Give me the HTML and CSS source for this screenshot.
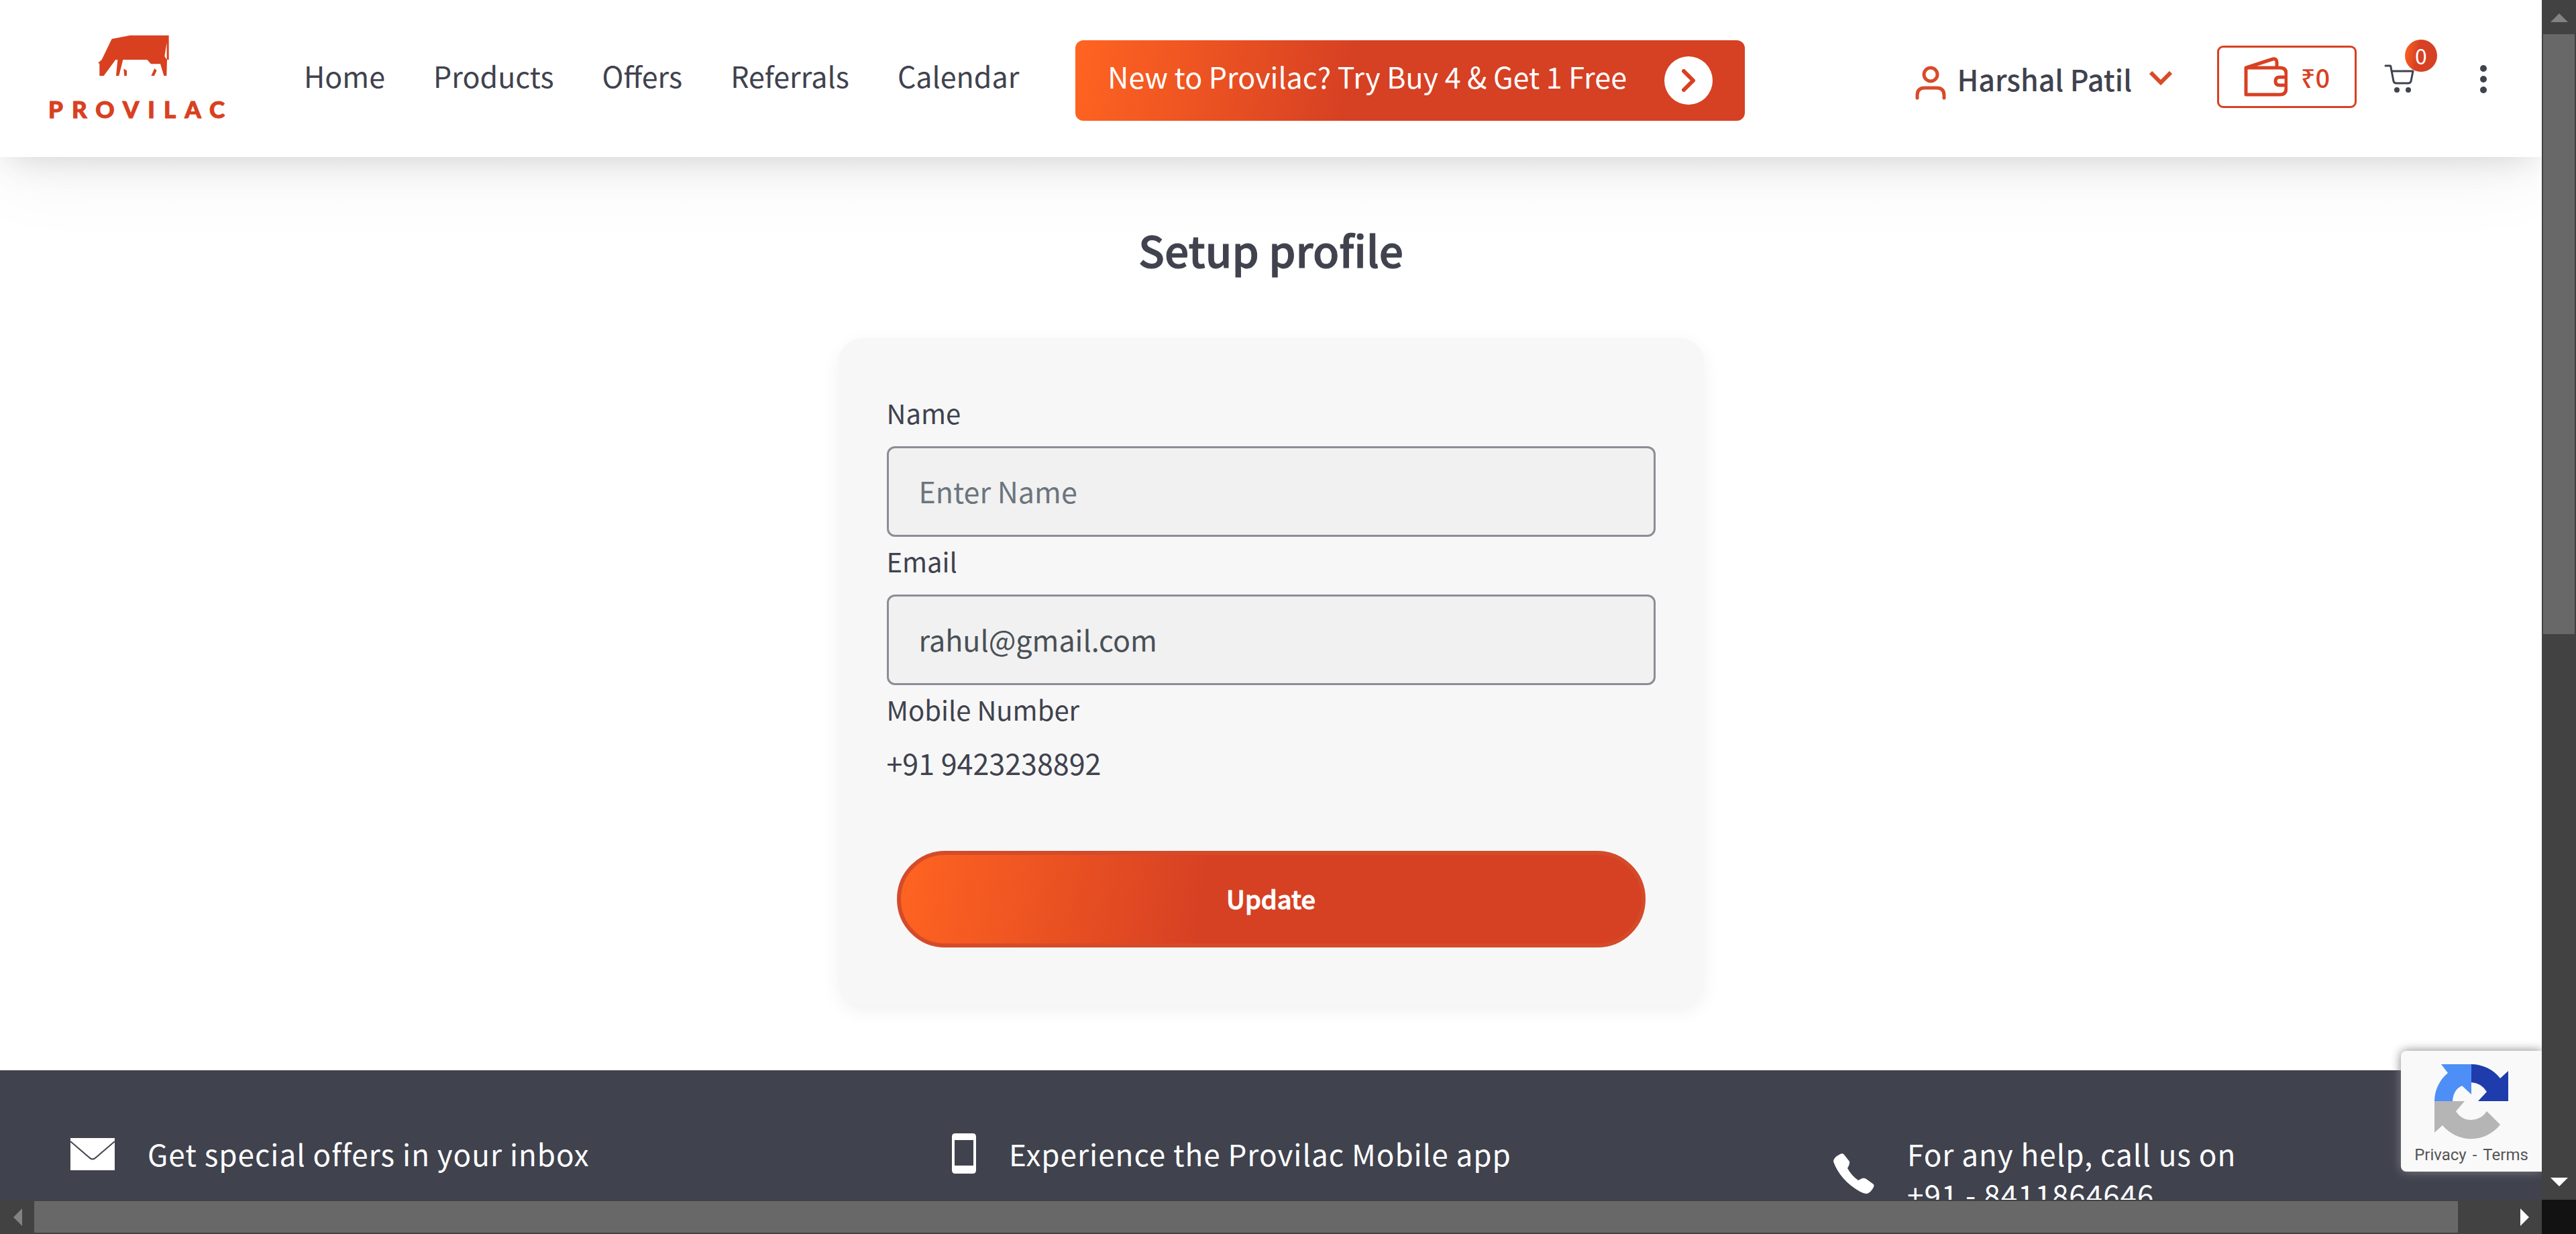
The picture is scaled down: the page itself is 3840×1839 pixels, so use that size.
FILE: index.html
```html
<!DOCTYPE html>
<html lang="en">
<head>
<meta charset="utf-8">
<title>Setup profile - Provilac</title>
<link rel="stylesheet" href="styles.css">
</head>
<body>
<div class="window">
  <div class="page">
    <header class="header">
      <a class="logo" href="#">
        <svg class="logo-cow" viewBox="258 38 318 184" aria-hidden="true">
          <path fill="#d94020" fill-rule="evenodd" d="M320 55 402 39H575V148H567L565 220H553L537 167H495L478 148H370L352 220H339L346 148H337L284 220H265V165L258 163 275 148ZM566 72 556 132 566 148ZM373 188 387 197V220H376ZM511 187 521 196 510 220H496Z"/>
        </svg>
        <span class="logo-text">PROVILAC</span>
      </a>
      <nav class="nav">
        <a href="#">Home</a>
        <a href="#">Products</a>
        <a href="#">Offers</a>
        <a href="#">Referrals</a>
        <a href="#">Calendar</a>
      </nav>
      <a class="promo" href="#">
        <span class="promo-text">New to Provilac? Try Buy 4 &amp; Get 1 Free</span>
        <span class="promo-arrow">
          <svg viewBox="0 0 20 34" width="20" height="34" aria-hidden="true"><path d="M3 3 17 17 3 31" fill="none" stroke="#d84022" stroke-width="6" stroke-linecap="round" stroke-linejoin="round"/></svg>
        </span>
      </a>
      <div class="account">
        <button class="user" type="button">
          <svg class="user-icon" viewBox="0 0 46 51" aria-hidden="true"><g fill="none" stroke="#d84b2a" stroke-width="5" stroke-linecap="round"><circle cx="23" cy="13" r="10"/><path d="M3 48V44Q3 33 14 33H32Q43 33 43 44V48"/></g></svg>
          <span class="user-name">Harshal Patil</span>
          <svg class="user-caret" viewBox="0 0 34 22" aria-hidden="true"><path d="M2 2 17 17 32 2" fill="none" stroke="#d84b2a" stroke-width="6"/></svg>
        </button>
        <a class="wallet" href="#">
          <svg class="wallet-icon" viewBox="0 0 65 59" aria-hidden="true"><g fill="none" stroke="#d84022" stroke-width="5" stroke-linejoin="round"><path d="M3 16H54Q63 16 63 25V46Q63 56 54 56H3ZM3 16 43 3Q49 2 49 8V15"/><path d="M63 30H53Q47 30 47 36T53 42H63"/></g></svg>
          <span>₹0</span>
        </a>
        <a class="cart" href="#" aria-label="Cart">
          <svg class="cart-icon" viewBox="0 0 45 43" aria-hidden="true"><g fill="none" stroke="#40424e" stroke-width="3" stroke-linecap="round" stroke-linejoin="round"><path d="M2 2H9Q10 2 10 4L14 25Q15 28 18 28H36Q39 28 40 25L43 10H12"/></g><circle cx="19" cy="38" r="4" fill="#40424e"/><circle cx="36" cy="38" r="4" fill="#40424e"/></svg>
          <span class="badge">0</span>
        </a>
        <button class="more" type="button" aria-label="More">
          <svg viewBox="0 0 10 42" width="10" height="42" aria-hidden="true"><g fill="#40424e"><circle cx="5" cy="5" r="5"/><circle cx="5" cy="21" r="5"/><circle cx="5" cy="37" r="5"/></g></svg>
        </button>
      </div>
    </header>

    <main class="main">
      <h1 class="title">Setup profile</h1>
      <form class="card">
        <div class="field">
          <label for="name">Name</label>
          <input id="name" type="text" placeholder="Enter Name">
        </div>
        <div class="field">
          <label for="email">Email</label>
          <input id="email" type="email" value="rahul@gmail.com">
        </div>
        <div class="field">
          <span class="field-label">Mobile Number</span>
          <span class="mobile">+91 9423238892</span>
        </div>
        <button class="update" type="button">Update</button>
      </form>
    </main>

    <footer class="footer">
      <div class="contact">
        <svg class="contact-icon mail" viewBox="0 0 66 48" aria-hidden="true"><path fill="#fff" d="M0 0H66V48H0Z"/><path d="M0 5 28 29Q33 34 38 29L66 5" fill="none" stroke="#40424e" stroke-width="2"/></svg>
        <p>Get special offers in your inbox</p>
      </div>
      <div class="contact">
        <svg class="contact-icon mobile-icon" viewBox="0 0 36 60" aria-hidden="true"><path fill="#fff" fill-rule="evenodd" d="M5 0H31Q36 0 36 5V55Q36 60 31 60H5Q0 60 0 55V5Q0 0 5 0ZM4 10V48H32V10Z"/></svg>
        <p>Experience the Provilac Mobile app</p>
      </div>
      <div class="contact">
        <svg class="contact-icon phone" viewBox="0 0 61 60" aria-hidden="true"><path fill="#fff" d="M13 0Q15 0 17 3L24 12Q25 15 21 22 27 33 37 40L43 37Q46 36 49 38L60 46Q61 48 60 50 56 58 50 60 46 60 40 57 10 40 0 12 0 6 10 1 12 0 13 0Z"/></svg>
        <p>For any help, call us on<br>+91 - 8411864646</p>
      </div>
    </footer>

    <aside class="captcha">
      <svg class="captcha-icon" viewBox="0 0 110 112" aria-hidden="true"><path fill="#4d8ff7" d="M0 55A55 55 0 0 1 20 13L10 0H55V45L41 32Q28 38 27 55Z"/><path fill="#1e3cac" d="M55 0A55 55 0 0 1 98 21L110 10V55H65L78 41Q70 28 55 27Z"/><path fill="#b5b5b5" d="M0 55H45L32 70Q40 83 55 83 71 82 78 70L98 90A55 55 0 0 1 12 91L0 102Z"/></svg>
      <div class="captcha-links"><a href="#">Privacy</a><span>-</span><a href="#">Terms</a></div>
    </aside>
  </div>

  <div class="scroll scroll-y" aria-hidden="true">
    <svg viewBox="0 0 51 51" width="51" height="51"><path fill="#838383" d="M13 33H39L26 20Z"/></svg>
    <div class="track"><div class="thumb"></div></div>
    <svg viewBox="0 0 51 51" width="51" height="51"><path fill="#fff" d="M13 18H39L26 31Z"/></svg>
  </div>
  <div class="scroll scroll-x" aria-hidden="true">
    <svg viewBox="0 0 51 51" width="51" height="51"><path fill="#838383" d="M33 13V39L20 26Z"/></svg>
    <div class="track"><div class="thumb"></div></div>
    <svg viewBox="0 0 51 51" width="51" height="51"><path fill="#fff" d="M19 13V39L32 26Z"/></svg>
  </div>
</div>
</body>
</html>
```
FILE: styles.css
```css
* { box-sizing: border-box; }

body {
  margin: 0;
  color: #40424e;
  background: #fff;
  font-family: "Noto Sans CJK SC", "Noto Sans", sans-serif;
  font-size: 43px;
}

a { color: inherit; text-decoration: none; }
button { margin: 0; padding: 0; border: 0; background: none; color: inherit; font: inherit; }
h1, p { margin: 0; }
svg { display: block; flex: none; }

.window {
  display: grid;
  grid-template-columns: minmax(0, 1fr) 51px;
  grid-template-rows: minmax(0, 1fr) 51px;
  height: 100vh;
  background: #121212;
}

.page {
  position: relative;
  overflow: hidden;
  background: #fff;
}

/* Header */
.header {
  display: flex;
  align-items: flex-start;
  padding: 60px 82px 48px 72px;
  background: #fff;
  box-shadow: 0 12px 48px -12px rgba(0, 0, 0, 0.15), 0 24px 120px rgba(0, 0, 0, 0.06);
}

.logo {
  display: flex;
  flex-direction: column;
  gap: 24px;
  width: 264px;
  margin-top: -8px;
  color: #d94020;
}
.logo-cow { width: 106px; height: 62px; margin-left: 74px; }
.logo-text {
  font: 900 35px/48px Lato, sans-serif;
  letter-spacing: 13px;
  white-space: nowrap;
  -webkit-text-stroke: 1px currentColor;
}

.nav {
  display: flex;
  gap: 72px;
  margin-left: 117px;
  line-height: 104px;
}

.promo {
  display: flex;
  align-items: center;
  gap: 56px;
  height: 120px;
  margin-left: 84px;
  padding: 0 48px;
  border-radius: 12px;
  background: linear-gradient(100deg, #ff6421 0%, #d64023 42%);
  color: #fff;
  white-space: nowrap;
}
.promo-text { line-height: 60px; padding-bottom: 14px; }
.promo-arrow {
  display: flex;
  align-items: center;
  justify-content: center;
  width: 72px;
  height: 72px;
  border-radius: 50%;
  background: #fff;
}

.account { display: flex; align-items: flex-start; margin-left: auto; }
.user { display: flex; align-items: center; height: 114px; white-space: nowrap; }
.user-icon { width: 46px; height: 51px; margin-top: 13px; }
.user-name { margin: 0 26px 0 16px; font-weight: 500; }
.user-caret { width: 34px; height: 22px; }

.wallet {
  display: flex;
  align-items: center;
  justify-content: center;
  gap: 20px;
  width: 208px;
  height: 93px;
  margin: 8px 0 0 67px;
  border: 3px solid #d84022;
  border-radius: 9px;
  color: #d84022;
  font-size: 38px;
  font-weight: 500;
}
.wallet-icon { width: 65px; height: 59px; }

.cart { position: relative; margin: 36px 0 0 41px; }
.cart-icon { width: 45px; height: 43px; }
.badge {
  position: absolute;
  left: 31px;
  top: -37px;
  width: 48px;
  height: 48px;
  border-radius: 50%;
  background: linear-gradient(100deg, #ff6421 0%, #d64023 42%);
  color: #fff;
  font-size: 32px;
  line-height: 46px;
  text-align: center;
}
.more { margin: 37px 0 0 98px; }

/* Profile form */
.main {
  display: flex;
  flex-direction: column;
  align-items: center;
  padding: 85px 48px 96px;
}
.title {
  margin-bottom: 80px;
  font-size: 64px;
  font-weight: 500;
  line-height: 105px;
  -webkit-text-stroke: 1px currentColor;
}

.card {
  display: flex;
  flex-direction: column;
  width: 100%;
  max-width: 1290px;
  padding: 75px 72px 87px;
  border-radius: 36px;
  background: #f7f7f7;
  box-shadow: 0 8px 28px rgba(0, 0, 0, 0.06);
}
.field { display: flex; flex-direction: column; }
.field label, .field-label {
  padding-bottom: 14px;
  font-size: 40px;
  line-height: 72px;
}
.field input {
  width: 100%;
  height: 135px;
  padding: 0 45px 4px;
  border: 3px solid #8d8d96;
  border-radius: 12px;
  background: #f1f1f1;
  color: #495057;
  font: inherit;
}
.field input::placeholder { color: #6c757d; opacity: 1; }
.mobile { line-height: 58px; }

.update {
  height: 144px;
  margin: 103px 15px 0;
  padding-bottom: 4px;
  border: 6px solid #d44b2a;
  border-radius: 72px;
  background: linear-gradient(100deg, #ff6421 0%, #d64023 42%);
  color: #fff;
  font-size: 38px;
  font-weight: 500;
  -webkit-text-stroke: 1px currentColor;
}

/* Footer */
.footer {
  display: grid;
  grid-template-columns: repeat(3, minmax(0, 1fr));
  gap: 258px;
  padding: 90px 0 90px 105px;
  background: #40424e;
  color: #fff;
  font-size: 44px;
  line-height: 60px;
  letter-spacing: 1px;
}
.contact { display: flex; gap: 49px; padding-top: 4px; }
.mail { width: 66px; height: 48px; margin-top: 7px; }
.mobile-icon { width: 36px; height: 60px; }
.phone { width: 61px; height: 60px; margin-top: 30px; }

/* reCAPTCHA badge */
.captcha {
  position: absolute;
  right: 0;
  bottom: 42px;
  display: flex;
  flex-direction: column;
  align-items: center;
  gap: 8px;
  width: 210px;
  height: 180px;
  padding-top: 20px;
  border-radius: 8px 0 0 8px;
  background: #f9f9f9;
  box-shadow: 0 0 15px #808080;
}
.captcha-icon { width: 110px; height: 112px; }
.captcha-links {
  display: flex;
  gap: 9px;
  color: #555;
  font: 24px/30px Roboto, sans-serif;
}

/* Scrollbars */
.scroll { display: flex; background: #424242; }
.scroll-y { flex-direction: column; }
.scroll-x { grid-row: 2; grid-column: 1; }
.track { flex: 1; display: flex; min-width: 0; min-height: 0; }
.thumb { background: #686868; }
.scroll-y .track { padding: 0 2px; }
.scroll-y .thumb { width: 100%; height: 53%; }
.scroll-x .track { padding: 2px 0; }
.scroll-x .thumb { width: 98%; height: 100%; }
```
